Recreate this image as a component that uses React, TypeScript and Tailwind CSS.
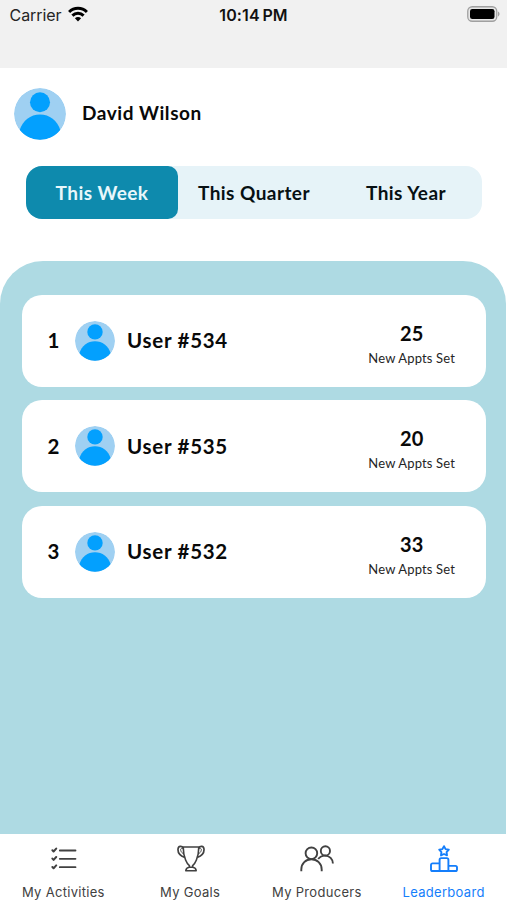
import { useState } from "react"
import clsx from "clsx"

type Tab = "activities" | "goals" | "producers" | "leaderboard"

const periods = ["This Week", "This Quarter", "This Year"]

const leaders = [
  { rank: 1, name: "User #534", count: 25 },
  { rank: 2, name: "User #535", count: 20 },
  { rank: 3, name: "User #532", count: 33 },
]

const tabs: { id: Tab; label: string }[] = [
  { id: "activities", label: "My Activities" },
  { id: "goals", label: "My Goals" },
  { id: "producers", label: "My Producers" },
  { id: "leaderboard", label: "Leaderboard" },
]

function Avatar({ className }: { className: string }) {
  return (
    <svg viewBox="0 0 52 52" className={clsx("shrink-0 overflow-hidden rounded-full", className)}>
      <circle cx="26" cy="26" r="26" fill="#9fd0f2" />
      <circle cx="26" cy="14.2" r="10" fill="#03a0fe" />
      <path d="M5.7 42C8.5 32.5 16.5 26.4 26 26.4S43.5 32.5 46.3 42A26 26 0 0 1 5.7 42Z" fill="#03a0fe" />
    </svg>
  )
}

function StatusBar() {
  return (
    <div className="grid h-[68px] shrink-0 grid-cols-3 items-start bg-[#f1f1f1] pt-[5px] font-['Inter','Liberation_Sans',sans-serif] text-[16px] leading-5 text-black">
      <div className="flex items-start gap-[6px] pl-[9.5px] text-[#252525]">
        <span className="tracking-[-0.05px]">Carrier</span>
        <svg className="mt-[1px]" width="20" height="16" viewBox="0 0 20 16" fill="none" stroke="#000" strokeWidth="3">
          <path d="M1.1 6C6.1 1.1 13.9 1.1 18.9 6" />
          <path d="M4.4 9.6C7.6 6.5 12.4 6.5 15.6 9.6" />
          <path d="M10 15.6 6.9 12.2C8.6 10.7 11.4 10.7 13.1 12.2Z" fill="#000" stroke="none" />
        </svg>
      </div>
      <div className="text-center font-semibold">
        <span className="tracking-[0.1px] text-[#111]">10:14&#8201;PM</span>
      </div>
      <div className="flex justify-end pt-[1px] pr-[7px]">
        <svg width="33" height="17" viewBox="0 0 33 17">
          <rect x="0.75" y="0.75" width="29" height="14.5" rx="4.5" fill="#e7e7e7" stroke="#a0a0a0" strokeWidth="1.3" />
          <rect x="3" y="3" width="24.5" height="10" rx="2.3" fill="#000" />
          <path d="M31 5.6C33 6.3 33 9.7 31 10.4Z" fill="#a0a0a0" />
        </svg>
      </div>
    </div>
  )
}

function TabIcon({ id }: { id: Tab }) {
  if (id === "activities") {
    return (
      <svg className="ml-[2px]" width="26" height="24" viewBox="0 0 26 24" fill="none" stroke="currentColor" strokeLinecap="round" strokeLinejoin="round">
        <path d="M8.8 4.5H24.5M8.8 12.8H24.5M8.8 21.2H24.5" strokeWidth="1.8" />
        <path d="M1.4 4.2 2.6 5.5 5.2 2.6M1.4 12.6 2.6 13.9 5.2 11M1.4 21 2.6 22.3 5.2 19.4" strokeWidth="2" />
      </svg>
    )
  }
  if (id === "goals") {
    return (
      <svg className="ml-[2px]" width="28" height="27" viewBox="0 0 28 27" fill="none" stroke="currentColor" strokeWidth="1.6" strokeLinejoin="round">
        <path d="M6.2 2H21.8C21.8 7 20.8 11.5 19.4 15C18.4 17.6 17 19.4 15.6 20.6V22.2H12.4V20.6C11 19.4 9.6 17.6 8.6 15C7.2 11.5 6.2 7 6.2 2Z" />
        <path d="M6.2 3.2C5.2.6 1.2.4 1 4.2.8 7.8 3.8 11 7.8 12.4" strokeWidth="1.7" />
        <path d="M6.4 4.2C4.6 2.6 3.2 3.6 3.8 5.6 4.2 7 5.2 8.2 6.9 9" strokeWidth="1" />
        <path d="M21.8 3.2C22.8.6 26.8.4 27 4.2 27.2 7.8 24.2 11 20.2 12.4" strokeWidth="1.7" />
        <path d="M21.6 4.2C23.4 2.6 24.8 3.6 24.2 5.6 23.8 7 22.8 8.2 21.1 9" strokeWidth="1" />
        <path d="M12.4 22.2C10.2 22.4 9 23.6 8.8 25.8H19.2C19 23.6 17.8 22.4 15.6 22.2" />
      </svg>
    )
  }
  if (id === "producers") {
    return (
      <svg width="34" height="27" viewBox="0 0 34 27" fill="none" stroke="currentColor" strokeWidth="1.9">
        <circle cx="11.4" cy="8.3" r="5.8" />
        <path d="M1.3 26.3V24.5C1.3 18.6 5.7 14.3 11.4 14.3S21.7 18.6 21.7 24.5V26.3" />
        <circle cx="25.4" cy="5.9" r="4.6" />
        <path d="M18.2 14C19.8 11.8 22.3 10.6 25 10.6 29.5 10.6 32.9 14 32.9 18.5" />
      </svg>
    )
  }
  return (
    <svg width="28" height="28" viewBox="0 0 28 28" fill="none" stroke="currentColor" strokeWidth="1.9" strokeLinejoin="round">
      <path d="m14 2.2 1.6 2.9 3.2.6-2.2 2.4.4 3.3-3-1.4-3 1.4.4-3.3-2.2-2.4 3.2-.6Z" />
      <path d="M9.6 27V15.7C9.6 14.7 10.2 14.1 11.2 14.1H16.8C17.8 14.1 18.4 14.7 18.4 15.7V27" />
      <path d="M9.6 19.4H2.6C1.6 19.4 1 20 1 21V25.4C1 26.4 1.6 27 2.6 27H25.4C26.4 27 27 26.4 27 25.4V23.5C27 22.5 26.4 21.9 25.4 21.9H18.4" />
    </svg>
  )
}

export default function App() {
  const [period, setPeriod] = useState(periods[0])
  const [activeTab, setActiveTab] = useState<Tab>("leaderboard")

  return (
    <div className="flex h-[900px] w-full flex-col overflow-hidden bg-white font-['Lato','Liberation_Sans',sans-serif] text-[#090909]">
      <StatusBar />

      <div className="flex items-center gap-4 pt-5 pl-[14px]">
        <Avatar className="size-[52px]" />
        <h1 className="pb-[3px] text-[19px] leading-6 font-bold tracking-[0.55px]">David Wilson</h1>
      </div>

      <div className="mx-[26px] mt-[26px] grid h-[53px] w-[456px] shrink-0 grid-cols-3 rounded-[16px] bg-[#e6f3f8]">
        {periods.map((item, index) => (
          <button
            key={item}
            onClick={() => setPeriod(item)}
            className={clsx(
              "rounded-[10px] pt-[1px] text-[19px] font-bold whitespace-nowrap",
              index === 0 && "rounded-l-[16px]",
              index === 2 && "rounded-r-[16px]",
              item === period ? "bg-[#0e8aad] text-[#e8f7fb]" : "text-[#071013]",
            )}
          >
            <span className="tracking-[0.45px]">{item}</span>
          </button>
        ))}
      </div>

      <main className="mt-[41.5px] mr-px flex flex-1 flex-col gap-[13.5px] rounded-t-[43px] bg-[#aedae3] pt-[34px] pr-5 pl-[21.5px]">
        {leaders.map(leader => (
          <div key={leader.rank} className="flex h-[92px] items-center rounded-[20px] bg-white pr-[31px] pl-[26px]">
            <span className="w-[27px] pb-[1px] text-[20.5px] leading-[30px] font-bold">{leader.rank}</span>
            <Avatar className="size-10" />
            <span className="ml-[12.5px] pb-[1px] text-[20.5px] leading-[30px] font-bold tracking-[0.72px]">{leader.name}</span>
            <div className="ml-auto flex flex-col items-center pt-[7px]">
              <span className="text-[20px] leading-6 font-bold">{leader.count}</span>
              <span className="mt-[3px] text-[13px] leading-5 tracking-[0.15px] text-[#252525]">New Appts Set</span>
            </div>
          </div>
        ))}
      </main>

      <nav className="grid h-[66px] shrink-0 grid-cols-4 bg-white font-['Inter','Liberation_Sans',sans-serif]">
        {tabs.map(tab => (
          <button
            key={tab.id}
            onClick={() => setActiveTab(tab.id)}
            className={clsx(
              "flex flex-col items-center pt-[10px] whitespace-nowrap",
              tab.id === activeTab ? "text-[#147efb]" : "text-[#414141]",
            )}
          >
            <span className="flex h-7 items-center">
              <TabIcon id={tab.id} />
            </span>
            <span className="mt-[12px] text-[13px] leading-4 tracking-[0.3px]">{tab.label}</span>
          </button>
        ))}
      </nav>
    </div>
  )
}
